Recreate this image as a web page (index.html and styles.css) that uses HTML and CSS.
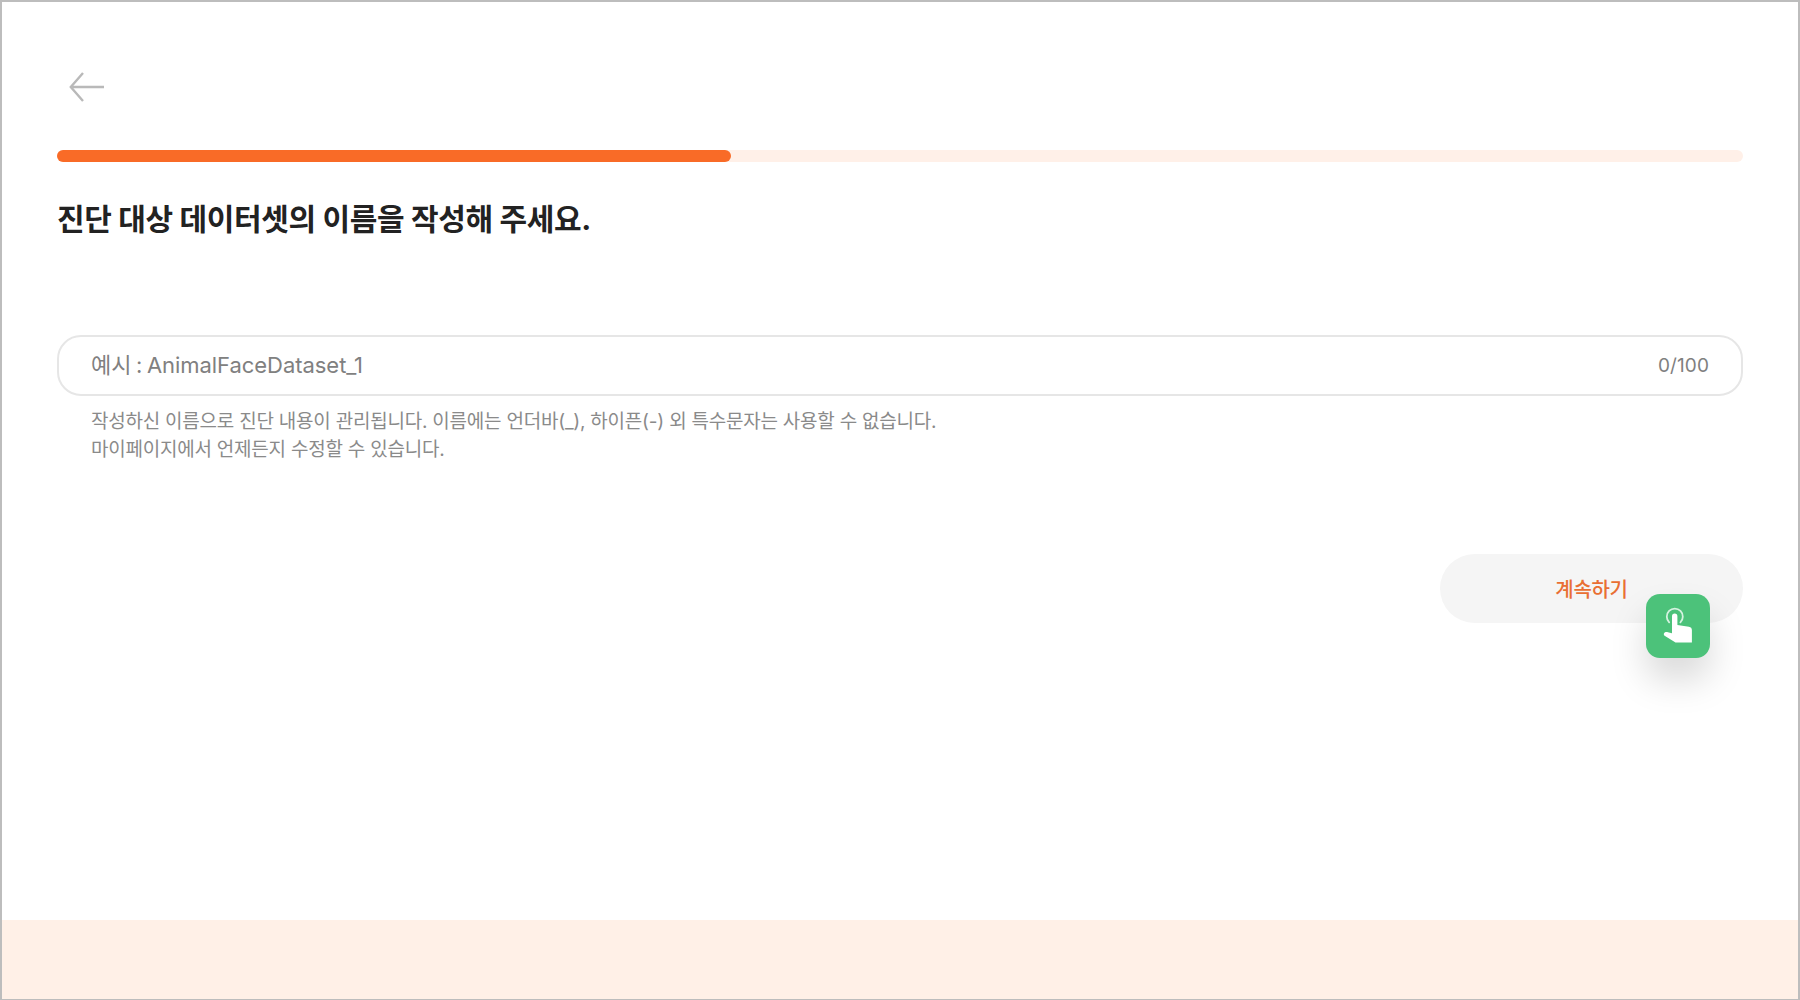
FILE: index.html
```html
<!DOCTYPE html>
<html lang="ko">
<head>
<meta charset="utf-8">
<title>데이터셋 이름</title>
<link rel="stylesheet" href="styles.css">
</head>
<body>
<div class="frame">
  <main class="content">
    <button class="back" aria-label="뒤로">
      <svg width="38" height="38" viewBox="0 0 38 38" fill="none" stroke="#b9b9b9" stroke-width="2.400"><path d="M36 19H3"/><path d="M15 5L2.800 19L15 33"/></svg>
    </button>
    <div class="progress"><div class="progress-fill"></div></div>
    <h1 class="title">진단 대상 데이터셋의 이름을 작성해 주세요.</h1>
    <div class="field">
      <span class="placeholder">예시 : AnimalFaceDataset_1</span>
      <span class="count">0/100</span>
    </div>
    <p class="hint">작성하신 이름으로 진단 내용이 관리됩니다. 이름에는 언더바(_), 하이픈(-) 외 특수문자는 사용할 수 없습니다.<br>마이페이지에서 언제든지 수정할 수 있습니다.</p>
    <div class="actions">
      <button class="continue">계속하기
        <span class="pointer">
          <svg width="64" height="64" viewBox="0 0 64 64" fill="none">
            <path d="M23.200 28.300A8 8 0 1 1 34.400 28.300" stroke="#d5f2e0" stroke-width="1.800" stroke-linecap="round"/>
            <path fill="#fff" d="M26 22.200a2.700 2.700 0 0 1 5.400 0V31l11.500 1.700c2 .3 3 1.500 3 3.500V48.500H29.500L19 42c-2.500-1.800-.6-4.500 2-4l5 1.200z"/>
          </svg>
        </span>
      </button>
    </div>
  </main>
  <footer class="footer"></footer>
</div>
</body>
</html>
```
FILE: styles.css
```css
* { box-sizing: border-box; }
html, body { margin: 0; height: 100%; }
body {
  font-family: Inter, "Noto Sans CJK KR", sans-serif;
  background: #fff;
}
.frame {
  height: 1000px;
  border: 2px solid #bdbdbd;
  border-bottom-width: 1px;
  display: flex;
  flex-direction: column;
}
.content {
  flex: 1;
  padding: 66px 55px 0;
}
.back {
  display: block;
  margin: 0 0 0 11px;
  padding: 0;
  border: 0;
  background: none;
  height: 38px;
}
.progress {
  margin-top: 44px;
  height: 12px;
  border-radius: 6px;
  background: #fff0e8;
}
.progress-fill {
  width: 674px;
  height: 100%;
  border-radius: 6px;
  background: #f96b27;
}
.title {
  margin: 38px 0 0;
  font-size: 30px;
  line-height: 38px;
  font-weight: 700;
  letter-spacing: -0.35px;
  color: #222;
}
.field {
  margin-top: 97px;
  height: 61px;
  border: 2px solid #e6e6e6;
  border-radius: 24px;
  padding: 0 32px;
  display: flex;
  align-items: center;
  justify-content: space-between;
  font-size: 22px;
}
.placeholder { color: #808080; padding-bottom: 5px; word-spacing: -1.5px; letter-spacing: -0.05px; }
.count { color: #808080; font-size: 19px; letter-spacing: 0.1px; }
.hint {
  margin: 12px 0 0 34px;
  font-size: 19px;
  line-height: 28px;
  letter-spacing: -0.23px;
  color: #8a8a8a;
}
.actions {
  margin-top: 90px;
  display: flex;
  justify-content: flex-end;
}
.continue {
  position: relative;
  width: 303px;
  height: 69px;
  border: 0;
  border-radius: 35px;
  background: #f5f5f5;
  color: #e96f33;
  font: 500 20px Inter, "Noto Sans CJK KR", sans-serif;
  letter-spacing: -0.3px;
}
.pointer {
  position: absolute;
  left: 206px;
  top: 40px;
  width: 64px;
  height: 64px;
  border-radius: 14px;
  background: #4cc27a;
  box-shadow: 0 22px 36px rgba(0, 0, 0, 0.15);
  display: flex;
  align-items: center;
  justify-content: center;
}
.footer {
  height: 79px;
  background: #fff0e7;
}
```
